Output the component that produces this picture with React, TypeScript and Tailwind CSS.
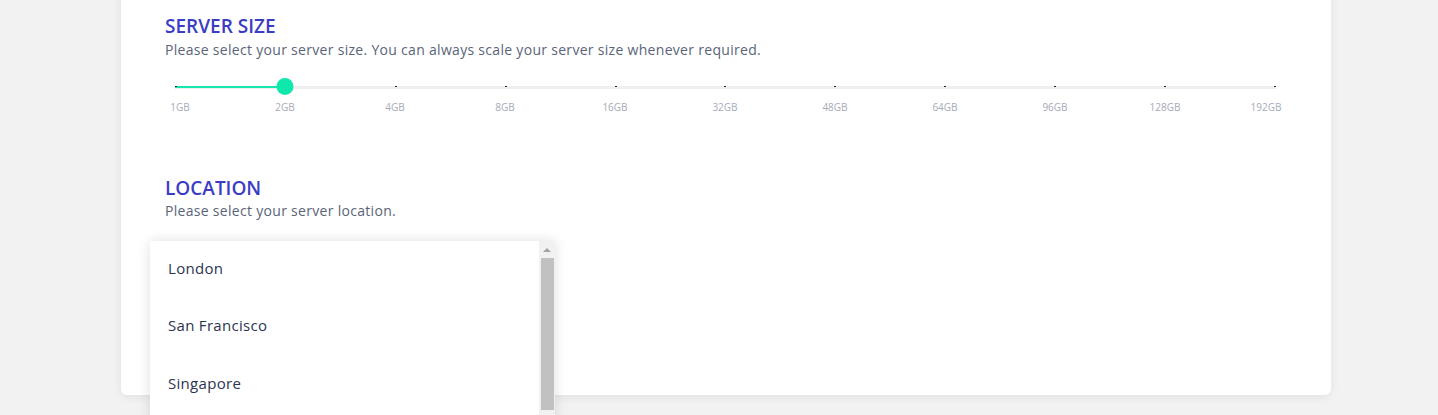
const sizes = ["1GB", "2GB", "4GB", "8GB", "16GB", "32GB", "48GB", "64GB", "96GB", "128GB", "192GB"];
const locations = ["London", "San Francisco", "Singapore"];

function SizeSlider({ value }: { value: number }) {
  const pct = (value / (sizes.length - 1)) * 100;
  return (
    <div className="ml-[10px] w-[1101px]">
      <div className="relative h-[17px]">
        {/* track */}
        <div className="absolute left-0 right-0 top-[8px] h-[3px] bg-[#eeeeee]" />
        <div className="absolute left-0 top-[8px] h-[2px] bg-[#14e6ac]" style={{ width: `${pct}%` }} />
        {/* ticks */}
        <div className="absolute left-0 right-0 top-[8px] flex justify-between">
          {sizes.map((s) => (
            <span key={s} className="h-px w-[2px] bg-[#222]" />
          ))}
        </div>
        {/* thumb */}
        <div
          className="absolute top-0 h-[17px] w-[17px] -translate-x-1/2 rounded-full bg-[#0fe8ab]"
          style={{ left: `${pct}%` }}
        />
      </div>
      <div className="ml-[-55px] mt-[6px] flex text-[10px] leading-[12px] text-[#a6aab8]">
        {sizes.map((s, i) => (
          <span
            key={s}
            className={
              "w-[110px] shrink-0 text-center " +
              (i === 0 ? "translate-x-[5px]" : i === sizes.length - 1 ? "translate-x-[-9px]" : "")
            }
          >
            {s}
          </span>
        ))}
      </div>
    </div>
  );
}

function LocationList() {
  return (
    <div className="absolute left-[-15px] top-[65px] z-10 flex h-[240px] w-[405px] bg-white shadow-[0_0_12px_rgba(0,0,0,0.13)]">
      <ul className="mt-[-2px] flex-1">
        {locations.map((l) => (
          <li
            key={l}
            className="flex h-[57.5px] items-center pl-[18px] text-[15px] tracking-[0.3px] text-[#2c3450]"
          >
            {l}
          </li>
        ))}
      </ul>
      {/* scrollbar */}
      <div className="flex w-[16px] flex-col items-center bg-[#f1f1f1]">
        <div className="flex h-[17px] w-full items-center justify-center">
          <span className="h-0 w-0 border-x-[4px] border-b-[4px] border-x-transparent border-b-[#a3a3a3]" />
        </div>
        <div className="h-[152px] w-[13px] bg-[#c1c1c1]" />
      </div>
    </div>
  );
}

export default function App() {
  return (
    <div className="h-[415px] overflow-hidden bg-[#f2f2f2] font-['Open_Sans',sans-serif]">
      <div className="ml-[121px] mt-[-20px] h-[415px] w-[1210px] rounded-[6px] bg-white pl-[44px] pt-[34px] shadow-[0_2px_10px_rgba(0,0,0,0.07)]">
        <section>
          <h2 className="text-[19px] font-semibold leading-[24px] text-[#3a3dc4]">SERVER SIZE</h2>
          <p className="mt-[3px] text-[14px] leading-[18px] tracking-[0.3px] text-[#5a6479]">
            Please select your server size. You can always scale your server size whenever required.
          </p>
          <div className="mt-[19px]">
            <SizeSlider value={1} />
          </div>
        </section>
        <section className="relative mt-[63px]">
          <h2 className="text-[19px] font-semibold leading-[24px] text-[#3a3dc4]">LOCATION</h2>
          <p className="mt-[2px] text-[14px] leading-[18px] tracking-[0.3px] text-[#5a6479]">
            Please select your server location.
          </p>
          <LocationList />
        </section>
      </div>
    </div>
  );
}
